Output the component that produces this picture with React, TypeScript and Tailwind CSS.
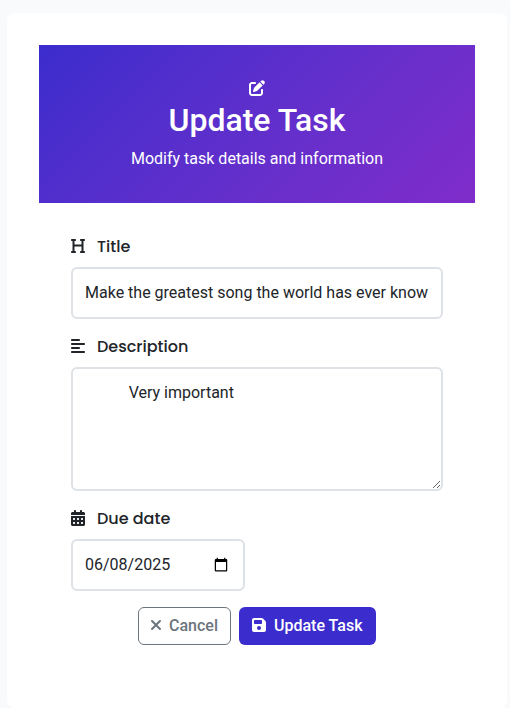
import { FaHeading, FaAlignLeft, FaPenToSquare, FaCalendarDays, FaFloppyDisk, FaXmark } from "react-icons/fa6";

const label = "flex items-center font-[Poppins,Inter,sans-serif] text-[16px] font-medium leading-6 text-[#212529]";
const box = "block rounded-[6px] border-2 border-[#dee2e6] bg-white text-[16px] leading-6 text-[#212529] outline-none";
const labelIcon = "mr-3 mb-[2px] h-4 w-[14px]";
const dateFields =
  " [&::-webkit-datetime-edit-month-field]:p-0 [&::-webkit-datetime-edit-day-field]:p-0 [&::-webkit-datetime-edit-year-field]:p-0 [&::-webkit-datetime-edit]:p-0";

export default function App() {
  return (
    <div className="h-[708px] overflow-hidden bg-[#f8fafc] pt-[13px] pl-[7px] font-[Roboto,sans-serif]">
      <div className="h-[695px] w-[500px] rounded-[8px] bg-white p-8">
        <header className="flex h-[158px] flex-col items-center bg-linear-135 from-[#3b2ccd] to-[#802cca] pt-[35px] text-white">
          <FaPenToSquare className="size-4" />
          <h1 className="mt-[5px] text-[32px] font-medium leading-[38px]">Update Task</h1>
          <p className="mt-[8px] text-[16px] leading-6">Modify task details and information</p>
        </header>
        <form className="px-8 pt-8">
          <label className={label}><FaHeading className={labelIcon} />Title</label>
          <input className={box + " mt-2 h-[52px] w-[372px] px-3 pb-[2px]"} defaultValue="Make the greatest song the world has ever know" />
          <label className={label + " mt-4"}><FaAlignLeft className={labelIcon} />Description</label>
          <textarea className={box + " mt-2 h-[124px] w-[372px] resize-y px-3 py-3"} defaultValue={"           Very important"} />
          <label className={label + " mt-4"}><FaCalendarDays className={labelIcon} />Due date</label>
          <input type="date" className={box + dateFields + " mt-2 h-[52px] w-[174px] px-3"} defaultValue="2025-06-08" />
          <div className="mt-4 flex justify-center gap-2">
            <button type="button" className="flex h-[38px] w-[93px] items-center rounded-[6px] border border-[#6c757d] pl-[11px] font-medium text-[#6c757d]"><FaXmark className="mr-[7px] mb-[2px] h-4 w-3" />Cancel</button>
            <button type="button" className="flex h-[38px] w-[137px] items-center rounded-[6px] bg-[#3b2ccd] pl-[13px] font-medium text-white"><FaFloppyDisk className="mr-2 mb-[2px] h-4 w-[14px]" />Update Task</button>
          </div>
        </form>
      </div>
    </div>
  );
}
